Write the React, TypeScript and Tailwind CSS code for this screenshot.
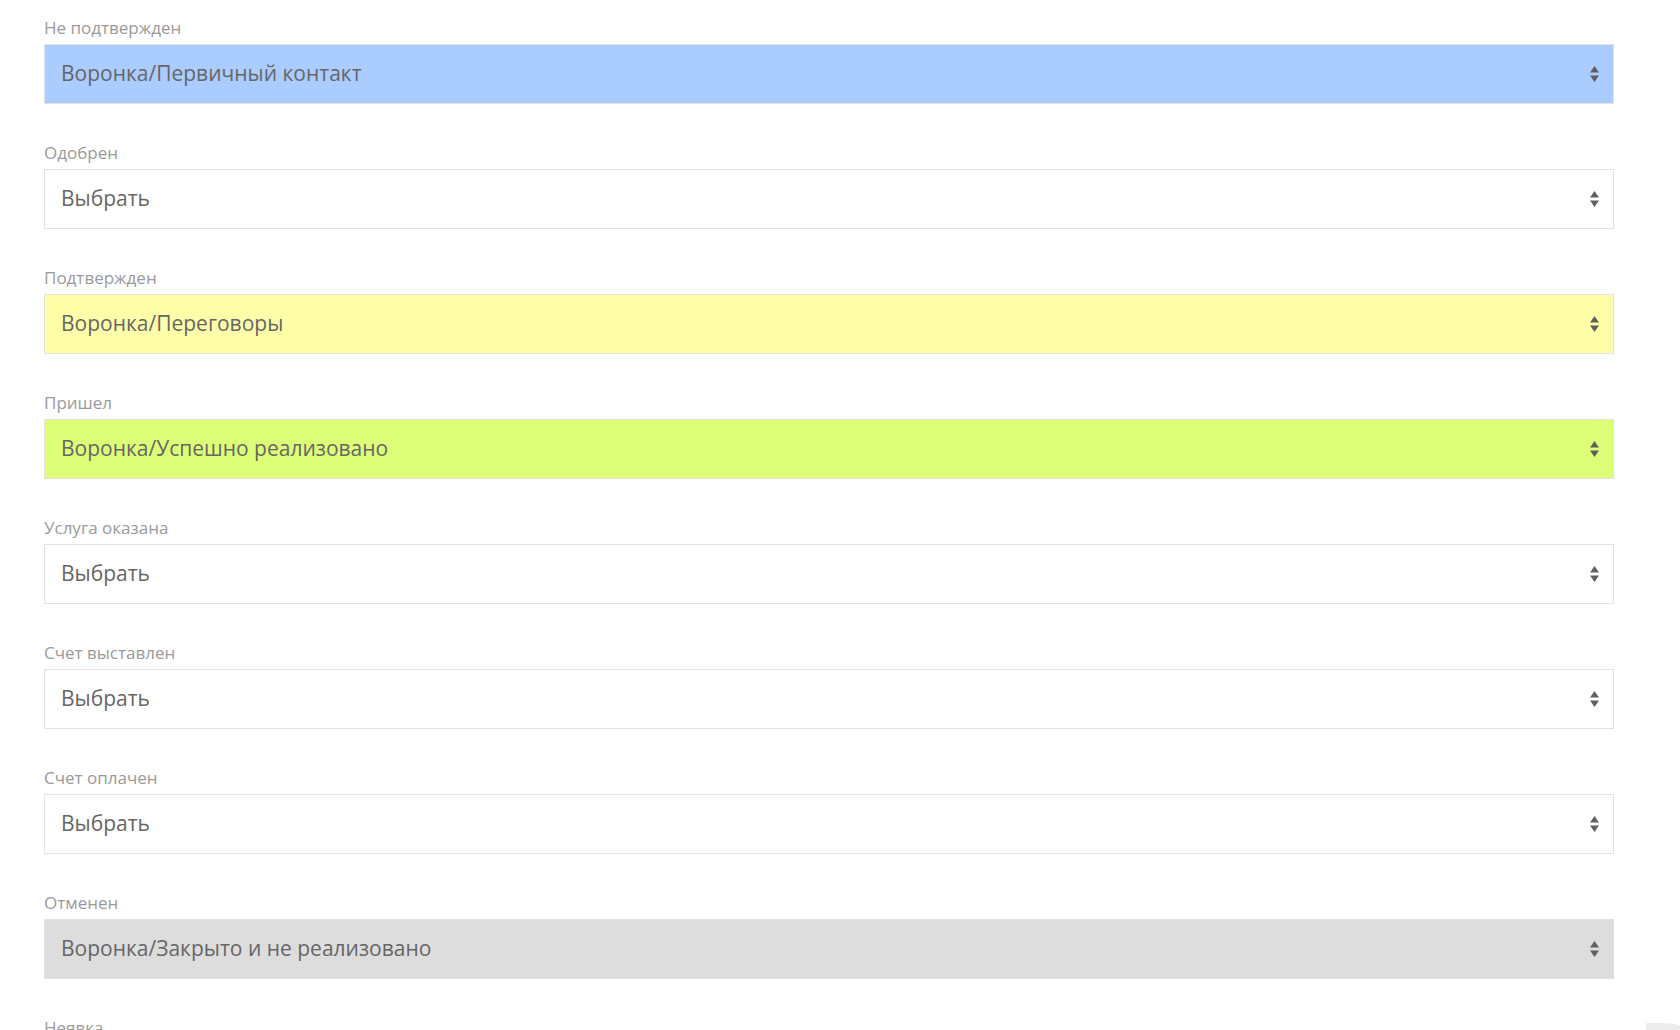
import React from "react";

type Stage = {
  label: string;
  value: string;
  bg: string;
};

const stages: Stage[] = [
  { label: "Не подтвержден", value: "Воронка/Первичный контакт", bg: "bg-[#aaccff]" },
  { label: "Одобрен", value: "Выбрать", bg: "bg-white" },
  { label: "Подтвержден", value: "Воронка/Переговоры", bg: "bg-[#ffffaa]" },
  { label: "Пришел", value: "Воронка/Успешно реализовано", bg: "bg-[#ddff77]" },
  { label: "Услуга оказана", value: "Выбрать", bg: "bg-white" },
  { label: "Счет выставлен", value: "Выбрать", bg: "bg-white" },
  { label: "Счет оплачен", value: "Выбрать", bg: "bg-white" },
  { label: "Отменен", value: "Воронка/Закрыто и не реализовано", bg: "bg-[#dddddd]" },
  { label: "Неявка", value: "Выбрать", bg: "bg-white" },
];

const Caret = () => (
  <svg width="9" height="16" viewBox="0 0 9 16" className="fill-[#5f5f5f]">
    <path d="M4.5 0 L9 6.5 L0 6.5 Z" />
    <path d="M0 9.5 L9 9.5 L4.5 16 Z" />
  </svg>
);

const StageSelect = ({ label, value, bg }: Stage) => (
  <div className="mb-[38px]">
    <div className="text-[17px] leading-[22px] text-[#9a9a9a] mb-[5px]">{label}</div>
    <div
      className={`${bg} h-[60px] border border-[#e2e2e2] flex items-center justify-between pl-[16px] pr-[14px]`}
    >
      <span className="text-[21px] text-[#666666]">{value}</span>
      <Caret />
    </div>
  </div>
);

export default function App() {
  return (
    <div
      className="relative h-[1030px] overflow-hidden bg-white"
      style={{ fontFamily: '"Open Sans", "Noto Sans", sans-serif' }}
    >
      <div className="w-[1570px] ml-[44px] pt-[17px]">
        {stages.map((s) => (
          <StageSelect key={s.label} {...s} />
        ))}
      </div>
      {/* scroll-to-top button peeking from the bottom corner */}
      <div className="absolute left-[1646px] top-[1023px] w-[60px] h-[60px] rounded-tr-[40px] bg-[#ececec]" />
    </div>
  );
}
